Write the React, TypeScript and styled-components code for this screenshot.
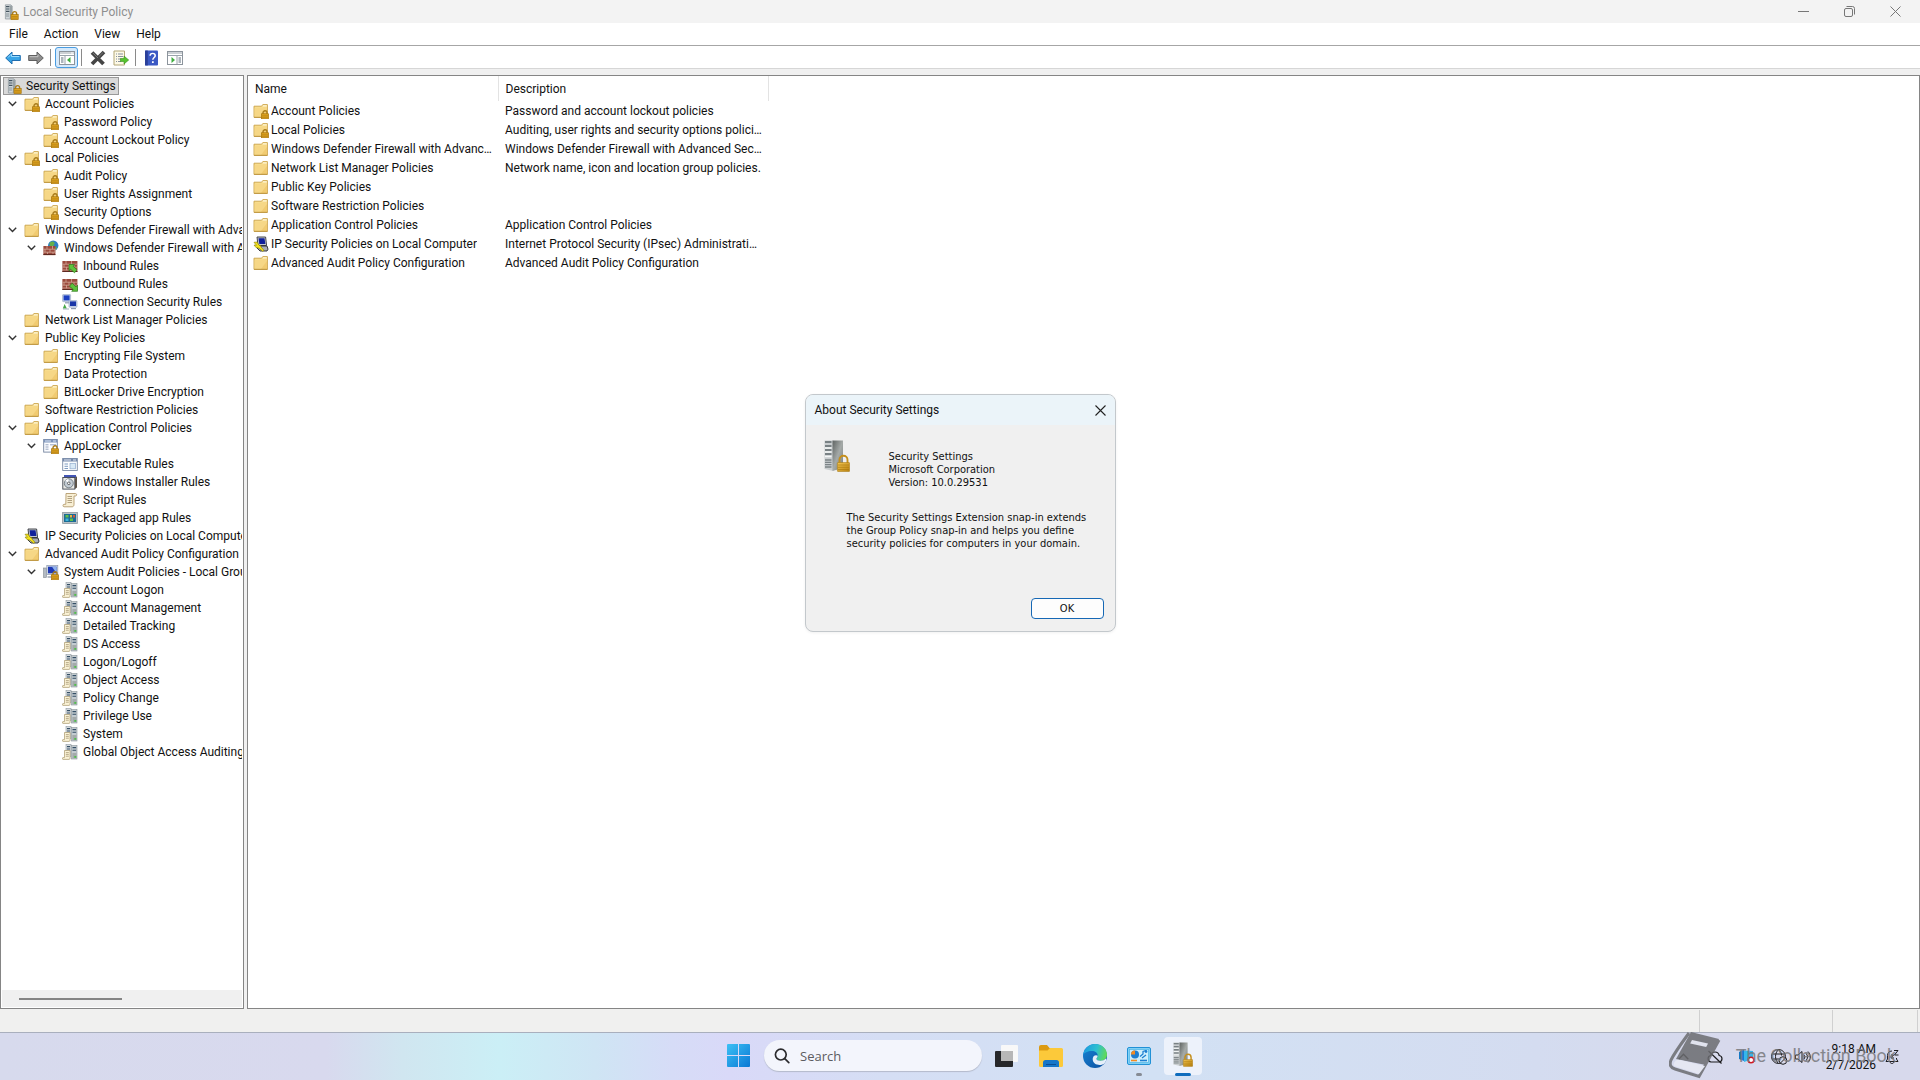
import React from "react";
import styled, { createGlobalStyle, css } from "styled-components";

const GlobalStyle = createGlobalStyle`
  *, *::before, *::after { box-sizing: border-box; }
  html, body, #root { height: 100%; }
  body { margin: 0; background: #f0f0f0; overflow: hidden; }
  button { font: inherit; color: inherit; background: none; border: 0; padding: 0; margin: 0; }
  ul { list-style: none; margin: 0; padding: 0; }
  svg { display: block; flex: none; }
`;

const uiFont = `Roboto, "Noto Sans", sans-serif`;

/* ---------- icons ---------- */

const Lock = ({ x = 8, y = 7 }: { x?: number; y?: number }) => (
  <g transform={`translate(${x} ${y})`}>
    <path d="M2 5V3a2 2 0 0 1 4 0v2" fill="none" stroke="#a87c1c" strokeWidth="1.4" />
    <rect x="0.4" y="4" width="7.2" height="5" fill="#dfa522" stroke="#a6740c" strokeWidth="0.7" />
    <path d="M1 6h6M1 7.5h6" stroke="#b27d10" strokeWidth="0.7" />
  </g>
);

const FolderShape = () => (
  <>
    <path d="M1 3.2h7.6l1.2-1.6h4.6v12.8H1z" fill="#f7dc8c" stroke="#c9a148" strokeWidth="0.9" />
    <path d="M1.6 5h7.8l1-1.4h3.6v10.2H1.6z" fill="#f6d786" />
    <path d="M8 13.9h6V6z" fill="#efc668" opacity="0.7" />
    <path d="M9.8 2.9h4" stroke="#fffbe5" strokeWidth="1.1" />
    <path d="M1.2 14.3h13.2" stroke="#b98f3a" strokeWidth="0.8" />
  </>
);

const TowerShape = () => (
  <>
    <path d="M2.4 0.8h5.2l1.6 1.2v13H2.4z" fill="#cfd6da" stroke="#8b9499" strokeWidth="0.7" />
    <path d="M6.8 1.2 9 2.2v12.4l-2.2.4z" fill="#98a1a4" />
    <path d="M3 2.6h3.4M3 5h3.4M3 7.4h3.4" stroke="#43535e" strokeWidth="1.1" />
    <path d="M3 10h3M3 12h3" stroke="#7a868c" strokeWidth="0.8" />
  </>
);

const BricksShape = ({ y = 3, w = 15, h = 11 }: { y?: number; w?: number; h?: number }) => (
  <g>
    <rect x="0.4" y={y} width={w} height={h} fill="#9b4a3d" />
    <path
      d={`M0.4 ${y + 3.2}h${w}M0.4 ${y + 6.2}h${w}M0.4 ${y + 9}h${w}M4 ${y}v3.2M9.5 ${y}v3.2M2 ${y + 3.2}v3M7 ${y + 3.2}v3M12 ${y + 3.2}v3M4.5 ${y + 6.2}v3M10 ${y + 6.2}v3`}
      stroke="#d9b3a4"
      strokeWidth="0.7"
      fill="none"
    />
    <path d={`M0.4 ${y + h - 0.5}h${w}`} stroke="#5d2a22" strokeWidth="1" />
  </g>
);

const icons: Record<string, React.ReactNode> = {
  folder: <FolderShape />,
  lockedFolder: (
    <>
      <FolderShape />
      <Lock x={8} y={6.8} />
    </>
  ),
  security: (
    <>
      <TowerShape />
      <Lock x={7.6} y={6.6} />
    </>
  ),
  firewall: (
    <>
      <circle cx="10.2" cy="5.6" r="5.2" fill="#2d7fc4" />
      <path d="M7 2.4c2-1.4 4-.8 4.6.6s-1.6 1.6-1 3 2.4 0 3 1.4-1.6 2.8-3 2.8-1-2.2-2.4-3S5.800 3.800 7 2.400z" fill="#63b04a" />
      <BricksShape y={6} w={12} h={9} />
    </>
  ),
  inbound: (
    <>
      <BricksShape />
      <path d="M7 6.500h5.500l-1.300 1.800 3.800 3.500-2.500 3-4-3.700L7 13z" fill="#5fc23c" stroke="#2d7a1b" strokeWidth="0.7" />
    </>
  ),
  outbound: (
    <>
      <BricksShape />
      <path d="M15.500 15.300H9.700l1.500-1.800-3.700-3.300 2.600-3 3.900 3.600 1.500-1.600z" fill="#5fc23c" stroke="#2d7a1b" strokeWidth="0.7" />
    </>
  ),
  connection: (
    <>
      <rect x="0.6" y="0.6" width="8" height="7" rx="0.5" fill="#c8d4ea" stroke="#8fa0c0" strokeWidth="0.6" />
      <rect x="1.6" y="1.4" width="6" height="5" fill="#1c3fc0" />
      <path d="M3 8.8h4" stroke="#8d9ab0" strokeWidth="1.2" />
      <rect x="7" y="6.6" width="8" height="6.6" rx="0.5" fill="#c8d4ea" stroke="#8fa0c0" strokeWidth="0.6" />
      <rect x="8" y="7.4" width="6" height="4.6" fill="#1a36a8" />
      <path d="M9 14.6h5" stroke="#8d9ab0" strokeWidth="1.2" />
      <path d="M0.8 14.5 2.6 10l2.2 4.5z" fill="#47a847" />
      <path d="M1 15h6" stroke="#9aa7ba" strokeWidth="0.9" />
    </>
  ),
  applocker: (
    <>
      <rect x="0.7" y="1.5" width="13.6" height="12.6" fill="#fbfcff" stroke="#74849f" strokeWidth="0.9" />
      <rect x="0.7" y="1.5" width="13.6" height="3" fill="#7d94ba" />
      <path d="M2 3h6M10 3h3" stroke="#e8effa" strokeWidth="0.9" />
      <path d="M2.5 6.8h3M2.5 9h3M2.5 11.2h3M7 6.8h6" stroke="#8b9bb5" strokeWidth="0.9" />
      <Lock x={8} y={6.8} />
    </>
  ),
  executable: (
    <>
      <rect x="0.7" y="2.5" width="14.6" height="12" fill="#fdfeff" stroke="#7c8ca6" strokeWidth="0.9" />
      <rect x="0.7" y="2.5" width="14.6" height="3" fill="#7488aa" />
      <path d="M2 4h7M11 4h3" stroke="#eef3fb" strokeWidth="0.9" />
      <path d="M2.5 8h3.5M2.5 10.3h3.5M2.5 12.5h3.5" stroke="#7f9bc0" strokeWidth="1" />
      <rect x="8" y="7.3" width="5.6" height="5.5" fill="#d8e9f6" stroke="#8fa9cc" strokeWidth="0.7" />
    </>
  ),
  installer: (
    <>
      <path d="M2 1h12v3H2z" fill="#4355b4" />
      <rect x="0.8" y="3.5" width="12" height="11.6" fill="#e9e9e5" stroke="#3f4650" strokeWidth="0.9" />
      <path d="M13 4.5 15 2v11.5L13 15z" fill="#5c5348" />
      <circle cx="6.8" cy="9.3" r="4.5" fill="#c3ccd4" stroke="#555e66" strokeWidth="0.7" />
      <path d="M6.8 9.3 3.4 6.6a4.5 4.5 0 0 1 3-1.7z" fill="#fff" />
      <circle cx="6.8" cy="9.3" r="1.3" fill="#fff" stroke="#333" strokeWidth="0.7" />
    </>
  ),
  script: (
    <>
      <path d="M4 1.5h9.5c1.5 0 1.5 2.5 0 2.5H12v8.500c0 1.500-.8 2.300-2 2.300H2c-1.300 0-1.300-2.500 0-2.500h1.800z" fill="#f8efd4" stroke="#b49b6e" strokeWidth="0.9" />
      <path d="M5.5 4.5H10M5.5 6.5H10M5.5 8.5H10M5.5 10.5H10" stroke="#a08d6b" strokeWidth="0.8" />
    </>
  ),
  packaged: (
    <>
      <rect x="0.6" y="2.5" width="14.8" height="11" fill="#b8c1c7" stroke="#8d989f" strokeWidth="0.8" />
      <rect x="2" y="4" width="12" height="8" fill="#1b6d94" />
      <path d="M3.5 5h3v2.5h-3zM8 8.5h3V11H8z" fill="#5fc04a" />
      <path d="M3.5 8.5h3V11h-3z" fill="#3fb4dc" />
      <path d="M8 5h2v2.5H8z" fill="#e8b53a" />
      <path d="M11 5h2v2.5h-2z" fill="#d0563e" />
    </>
  ),
  ipsec: (
    <>
      <path d="M4 1h8.600l1 8.500H5z" fill="#c4c8d0" stroke="#33363c" strokeWidth="0.9" />
      <path d="M5.500 2.300h6l.9 5.700H6.300z" fill="#10209c" />
      <path d="M5 10h9l1 3.200-1 1.800H7L4 12z" fill="#a9adb5" stroke="#26282c" strokeWidth="0.9" />
      <path d="M1 6.300 4 6l2 3.200 1.500.3.500 1.500 3 3.300-1.300 1L6 12.200l-3-.700-2-2.500 2.500.3z" fill="#f4e41c" stroke="#8a7d00" strokeWidth="0.6" />
    </>
  ),
  systemAudit: (
    <>
      <rect x="0.6" y="4" width="2.8" height="9.5" fill="#b3bac2" stroke="#7e868e" strokeWidth="0.6" />
      <rect x="3.8" y="1.5" width="11" height="9" fill="#d3dbe8" stroke="#8c98ab" strokeWidth="0.7" />
      <rect x="5" y="2.7" width="8.6" height="6.6" fill="#1d38b4" />
      <path d="M9 2.7h4.600v6.600z" fill="#8fb1ec" />
      <path d="M4.500 13h5" stroke="#98a1ad" strokeWidth="1.4" />
      <Lock x={8} y={6.8} />
    </>
  ),
  audit: (
    <>
      <rect x="4" y="0.6" width="5" height="12" fill="#d5dade" stroke="#8f999f" strokeWidth="0.6" />
      <rect x="9.6" y="1.5" width="5.4" height="13.5" fill="#c3cbd0" stroke="#8a949a" strokeWidth="0.6" />
      <path d="M5 2.6h3M5 5h3M10.500 3.600h3.600M10.500 6.200h3.600" stroke="#344f66" strokeWidth="1.1" />
      <rect x="10.4" y="9" width="4" height="5.3" fill="#a3aaaa" />
      <rect x="12.3" y="12" width="2" height="1.8" fill="#4fc04a" />
      <path d="M2.500 6.500h5.600v7.700c0 .7-.5 1.200-1 1.200H.9c-.7 0-.7-1.800 0-1.800h1.600z" fill="#fbf3d6" stroke="#a8976b" strokeWidth="0.7" />
      <path d="M3.800 8.600h3M3.800 10.400h3M3.800 12.200h3" stroke="#9c8d68" strokeWidth="0.7" />
    </>
  ),
};

const Icon = ({ name }: { name: string }) => (
  <svg width="16" height="16" viewBox="0 0 16 16" aria-hidden="true">
    {icons[name]}
  </svg>
);

const ServerLock = ({ width, height }: { width: number; height: number }) => (
  <svg width={width} height={height} viewBox="0 0 26 32" aria-hidden="true">
    <defs>
      <linearGradient id="side" x1="0" y1="0" x2="1" y2="1">
        <stop offset="0" stopColor="#5f6463" />
        <stop offset="0.5" stopColor="#a5aaa8" />
        <stop offset="1" stopColor="#7a7f7d" />
      </linearGradient>
      <linearGradient id="gold" x1="0" y1="0" x2="1" y2="1">
        <stop offset="0" stopColor="#f3c653" />
        <stop offset="1" stopColor="#b8810f" />
      </linearGradient>
    </defs>
    <path d="M0.500 0.500h9v30.500l-9-2z" fill="#c9cdcf" />
    <path d="M8.500 0.500H19V28l-10.500 3z" fill="url(#side)" />
    <path d="M1 2h6.500M1 6h6.500M1 10h6.500M1 14h6.500" stroke="#5f686c" strokeWidth="1.4" />
    <path d="M1 8h6.500M1 12h6.500M1 16.500h6.500" stroke="#f4f6f6" strokeWidth="1.3" />
    <path d="M1 20h6.500M1 22.300h6.500M1 24.600h6.500M1 27h6.500" stroke="#7c8487" strokeWidth="1.3" />
    <path d="M15.500 23v-3.200a4 4 0 0 1 8 0V23" fill="none" stroke="#c58f1c" strokeWidth="1.9" />
    <rect x="13.4" y="22.5" width="12.2" height="9" rx="0.6" fill="url(#gold)" stroke="#a57408" strokeWidth="0.5" />
    <path d="M14 25h11M14 27.300h11M14 29.500h11" stroke="#a8770b" strokeWidth="0.6" />
  </svg>
);

/* ---------- window chrome ---------- */

const Desktop = styled.div`
  display: flex;
  flex-direction: column;
  height: 100vh;
  color: #111;
  font: 12px/16px ${uiFont};
  cursor: default;
`;

const Window = styled.main`
  position: relative;
  display: flex;
  flex: 1;
  flex-direction: column;
  min-height: 0;
`;

const TitleBar = styled.header`
  display: flex;
  align-items: center;
  height: 23px;
  padding: 0 2px 0 3px;
  background: #f3f3f3;
`;

const WindowTitle = styled.h1`
  flex: 1;
  margin: 0 0 0 4px;
  font: inherit;
  color: #8f8f8f;
`;

const CaptionButton = styled.button`
  display: grid;
  place-items: center;
  width: 46px;
  height: 21px;
`;

const MenuBar = styled.nav`
  display: flex;
  align-items: center;
  gap: 16px;
  height: 23px;
  padding-left: 9px;
  background: #fff;
  border-bottom: 1px solid #a6a6a6;
`;

const ToolBar = styled.div`
  display: flex;
  align-items: center;
  height: 23px;
  padding: 1px 0 0 1px;
  background: #fff;
  border-bottom: 1px solid #d6d6d6;
`;

const ToolButton = styled.button<{ $active?: boolean }>`
  display: grid;
  place-items: center;
  width: 23px;
  height: 21px;
  border: 1px solid transparent;
  border-radius: 3px;
  ${(p) =>
    p.$active &&
    css`
      background: #d5e9fb;
      border-color: #4a9ce0;
    `}
`;

const ToolDivider = styled.span`
  width: 1px;
  height: 17px;
  margin: 0 4px 0 3px;
  background: #8a8a8a;
`;

const Panes = styled.div`
  display: grid;
  grid-template-columns: 244px 1fr;
  gap: 3px;
  flex: 1;
  min-height: 0;
  padding-top: 6px;
`;

const Pane = styled.section`
  display: flex;
  flex-direction: column;
  min-width: 0;
  background: #fff;
  border: 1px solid #858585;
`;

/* ---------- tree ---------- */

const Tree = styled.ul`
  flex: 1;
  min-height: 0;
  margin-right: 1px;
  padding: 1px 0 0 2px;
  overflow: hidden;
`;

const TreeRow = styled.li<{ $depth: number }>`
  display: flex;
  align-items: center;
  height: 18px;
  padding-left: ${(p) => p.$depth * 19 - 18}px;
  white-space: nowrap;
`;

const RootRow = styled.li`
  display: flex;
  height: 18px;
`;

const RootLabel = styled.span`
  display: flex;
  align-items: center;
  gap: 4px;
  height: 18px;
  padding: 0 2px;
  background: #d9d9d9;
  border: 1px solid #999;
`;

const Expander = styled.button`
  display: grid;
  flex: none;
  place-items: center;
  width: 16px;
  height: 16px;
  margin-right: 4px;
`;

const ExpanderSpace = styled.span`
  flex: none;
  width: 20px;
`;

const TreeLabel = styled.span`
  margin-left: 5px;
`;

const HScroll = styled.div`
  height: 17px;
  margin: 0 1px 1px;
  padding: 8px 17px 0;
  background: #f0f0f0;
`;

const HThumb = styled.div`
  width: 50%;
  height: 2px;
  background: #858585;
`;

type Node = [depth: number, icon: string, label: string, open?: boolean];

const nodes: Node[] = [
  [1, "lockedFolder", "Account Policies", true],
  [2, "lockedFolder", "Password Policy"],
  [2, "lockedFolder", "Account Lockout Policy"],
  [1, "lockedFolder", "Local Policies", true],
  [2, "lockedFolder", "Audit Policy"],
  [2, "lockedFolder", "User Rights Assignment"],
  [2, "lockedFolder", "Security Options"],
  [1, "folder", "Windows Defender Firewall with Advanced Security", true],
  [2, "firewall", "Windows Defender Firewall with Advanced Security", true],
  [3, "inbound", "Inbound Rules"],
  [3, "outbound", "Outbound Rules"],
  [3, "connection", "Connection Security Rules"],
  [1, "folder", "Network List Manager Policies"],
  [1, "folder", "Public Key Policies", true],
  [2, "folder", "Encrypting File System"],
  [2, "folder", "Data Protection"],
  [2, "folder", "BitLocker Drive Encryption"],
  [1, "folder", "Software Restriction Policies"],
  [1, "folder", "Application Control Policies", true],
  [2, "applocker", "AppLocker", true],
  [3, "executable", "Executable Rules"],
  [3, "installer", "Windows Installer Rules"],
  [3, "script", "Script Rules"],
  [3, "packaged", "Packaged app Rules"],
  [1, "ipsec", "IP Security Policies on Local Computer"],
  [1, "folder", "Advanced Audit Policy Configuration", true],
  [2, "systemAudit", "System Audit Policies - Local Group Policy Object", true],
  [3, "audit", "Account Logon"],
  [3, "audit", "Account Management"],
  [3, "audit", "Detailed Tracking"],
  [3, "audit", "DS Access"],
  [3, "audit", "Logon/Logoff"],
  [3, "audit", "Object Access"],
  [3, "audit", "Policy Change"],
  [3, "audit", "Privilege Use"],
  [3, "audit", "System"],
  [3, "audit", "Global Object Access Auditing"],
];

/* ---------- list ---------- */

const ListTable = styled.table`
  width: 520px;
  table-layout: fixed;
  border-collapse: collapse;
`;

const HeadCell = styled.th<{ $width: number }>`
  width: ${(p) => p.$width}px;
  height: 25px;
  padding: 0 6px 0 7px;
  border-right: 1px solid #e3e3e3;
  font-weight: 400;
  text-align: left;
`;

const Cell = styled.td`
  height: 19px;
  padding: 0 6px 0 7px;
  overflow: hidden;
  text-overflow: ellipsis;
  white-space: nowrap;
`;

const NameCell = styled.div`
  display: flex;
  align-items: center;
  gap: 2px;
  margin-left: -2px;
`;

const Ellipsis = styled.span`
  overflow: hidden;
  text-overflow: ellipsis;
`;

const rows: [string, string, string][] = [
  ["lockedFolder", "Account Policies", "Password and account lockout policies"],
  ["lockedFolder", "Local Policies", "Auditing, user rights and security options policies"],
  ["folder", "Windows Defender Firewall with Advanced Security", "Windows Defender Firewall with Advanced Security"],
  ["folder", "Network List Manager Policies", "Network name, icon and location group policies."],
  ["folder", "Public Key Policies", ""],
  ["folder", "Software Restriction Policies", ""],
  ["folder", "Application Control Policies", "Application Control Policies"],
  ["ipsec", "IP Security Policies on Local Computer", "Internet Protocol Security (IPsec) Administration."],
  ["folder", "Advanced Audit Policy Configuration", "Advanced Audit Policy Configuration"],
];

/* ---------- status bar ---------- */

const StatusBar = styled.footer`
  display: flex;
  justify-content: flex-end;
  height: 23px;
  padding: 1px 2px 0 0;
  background: #f0f0ef;
`;

const StatusCell = styled.span<{ $width: number }>`
  width: ${(p) => p.$width}px;
  border-left: 1px solid #d0d0d0;
  &:last-child {
    border-right: 1px solid #d0d0d0;
  }
`;

/* ---------- dialog ---------- */

const DialogLayer = styled.div`
  position: absolute;
  inset: 0;
  display: grid;
  place-items: center;
  padding-bottom: 6px;
`;

const Dialog = styled.div`
  width: 311px;
  background: #f0f0f0;
  border: 1px solid #c3c8cc;
  border-radius: 8px;
  overflow: hidden;
  box-shadow: 0 1px 3px rgba(0, 0, 0, 0.06);
`;

const DialogTitle = styled.div`
  display: flex;
  align-items: center;
  justify-content: space-between;
  height: 30px;
  padding: 0 9px;
  background: #ebf4f9;
`;

const DialogHeading = styled.h2`
  margin: 0;
  font: inherit;
`;

const DialogBody = styled.div`
  display: flex;
  flex-direction: column;
  padding: 15px 11px 12px 18px;
  font: 11px/13px "DejaVu Sans Condensed", "Noto Sans", sans-serif;
`;

const Product = styled.div`
  display: flex;
  gap: 39px;
`;

const ProductText = styled.p`
  margin: 10px 0 0;
`;

const Blurb = styled.p`
  margin: 22px 0 48px 23px;
  white-space: nowrap;
`;

const OkButton = styled.button`
  align-self: flex-end;
  width: 73px;
  height: 21px;
  background: #fdfdfd;
  border: 1px solid #1668b5;
  border-radius: 4px;
`;

/* ---------- taskbar ---------- */

const Taskbar = styled.div`
  position: relative;
  display: grid;
  grid-template-columns: 1fr auto 1fr;
  align-items: center;
  height: 48px;
  border-top: 1px solid #a9afbd;
  background: linear-gradient(
    90deg,
    #d7daed 0%,
    #d8d9ee 17%,
    #d0e6f0 21%,
    #cbeff6 26%,
    #cfe5f4 31%,
    #d6dcf7 35%,
    #d9d9f8 38%,
    #d5def4 46%,
    #d2e1f4 60%,
    #d4dcf0 80%,
    #d7d9ec 90%,
    #d7d9ec 100%
  );
`;

const TaskGroup = styled.div`
  display: flex;
  grid-column: 2;
  align-items: center;
  padding: 0 0 2px 1px;
`;

const TaskButton = styled.button`
  position: relative;
  display: grid;
  place-items: center;
  width: 44px;
  height: 44px;
`;

const ActiveTile = styled.span`
  display: grid;
  place-items: center;
  width: 38px;
  height: 38px;
  padding-bottom: 2px;
  border-radius: 4px;
  background: #edf2fb;
`;

const Indicator = styled.span<{ $active?: boolean }>`
  position: absolute;
  bottom: 2px;
  left: 50%;
  width: ${(p) => (p.$active ? 16 : 6)}px;
  height: 3px;
  transform: translateX(-50%);
  border-radius: 2px;
  background: ${(p) => (p.$active ? "#0f6cbd" : "#868b94")};
`;

const SearchBox = styled.label`
  display: flex;
  align-items: center;
  gap: 10px;
  width: 218px;
  height: 31px;
  margin: 0 3px 0 4px;
  padding: 0 10px;
  border-radius: 16px;
  background: #f3f5fc;
  box-shadow: 0 1px 1px #b4bacb;
`;

const SearchInput = styled.input`
  flex: 1;
  min-width: 0;
  padding: 0;
  border: 0;
  outline: 0;
  background: none;
  font: 13px/20px "Open Sans", "Noto Sans", sans-serif;
  &::placeholder {
    color: #5c5c60;
    opacity: 1;
  }
`;

const Tray = styled.div`
  display: flex;
  grid-column: 3;
  align-items: center;
  justify-content: flex-end;
  padding-right: 20px;
`;

const TrayButton = styled.button<{ $gap: number }>`
  display: grid;
  place-items: center;
  width: 16px;
  height: 20px;
  margin-right: ${(p) => p.$gap}px;
`;

const Clock = styled.time`
  width: 56px;
  margin-right: 8px;
  text-align: right;
`;

const Watermark = styled.div`
  position: absolute;
  right: 24px;
  bottom: 0;
  display: flex;
  align-items: center;
  gap: 15px;
  height: 48px;
  color: #77787c;
  font: 18px/20px ${uiFont};
  opacity: 0.85;
  pointer-events: none;
`;

export default function App() {
  return (
    <Desktop>
      <GlobalStyle />
      <Window>
        <TitleBar>
          <Icon name="security" />
          <WindowTitle>Local Security Policy</WindowTitle>
          <CaptionButton aria-label="Minimize">
            <svg width="11" height="11" viewBox="0 0 11 11"><path d="M0 5.500h11" stroke="#777" /></svg>
          </CaptionButton>
          <CaptionButton aria-label="Restore">
            <svg width="11" height="11" viewBox="0 0 11 11" fill="none" stroke="#777">
              <rect x="0.5" y="2.5" width="8" height="8" rx="1.5" />
              <path d="M2.500 .5h6a2 2 0 0 1 2 2v6" />
            </svg>
          </CaptionButton>
          <CaptionButton aria-label="Close">
            <svg width="11" height="11" viewBox="0 0 11 11"><path d="M.5.5l10 10M10.500.5l-10 10" stroke="#777" /></svg>
          </CaptionButton>
        </TitleBar>

        <MenuBar>
          <button>File</button>
          <button>Action</button>
          <button>View</button>
          <button>Help</button>
        </MenuBar>

        <ToolBar>
          <ToolButton aria-label="Back">
            <svg width="16" height="14" viewBox="0 0 16 14">
              <path d="M.7 7 7 1v3.500h8.300v5H7V13z" fill="#38a4e6" stroke="#1f6daf" />
              <path d="M3 6.500 6.500 3v2.500h7.800" fill="none" stroke="#9adcff" />
            </svg>
          </ToolButton>
          <ToolButton aria-label="Forward">
            <svg width="16" height="14" viewBox="0 0 16 14">
              <path d="M15.300 7 9 1v3.500H.7v5H9V13z" fill="#8d8d8d" stroke="#5f5f5f" />
              <path d="M1.700 5.700H10V3.500" fill="none" stroke="#c4c4c4" />
            </svg>
          </ToolButton>
          <ToolDivider />
          <ToolButton $active aria-label="Show or hide console tree">
            <svg width="16" height="14" viewBox="0 0 16 14">
              <rect x="0.5" y="0.5" width="15" height="13" fill="#fff" stroke="#8c949c" />
              <path d="M1 2h14M1 4.500h14" stroke="#9aa3ab" />
              <path d="M12 2h2.500" stroke="#fff" />
              <path d="M2 7h2.500M2 9h2.500M2 11h2.500" stroke="#5d6c7a" />
              <path d="M6 5v8" stroke="#9aa3ab" />
              <path d="M11.500 6v6L8 9z" fill="#3fae3f" />
            </svg>
          </ToolButton>
          <ToolDivider />
          <ToolButton aria-label="Delete">
            <svg width="16" height="16" viewBox="0 0 16 16">
              <path d="M2 2.500 13.500 14M14 2 2 14" stroke="#454545" strokeWidth="3.800" />
              <path d="M2.500 2.600 8 8M13 2.600 9 6.500" stroke="#7a7a7a" />
            </svg>
          </ToolButton>
          <ToolButton aria-label="Export List">
            <svg width="16" height="16" viewBox="0 0 16 16">
              <path d="M1 1h10.500v14H1z" fill="#fdf9e6" stroke="#b2a677" />
              <path d="M3 4h1M5 4h5M3 6.500h1M5 6.500h5M3 9h1M5 9h3M3 11.500h1M5 11.500h3" stroke="#8791a0" />
              <path d="M7.500 8.500H11V6l4.700 4-4.700 4v-2.500H7.500z" fill="#56c32f" stroke="#3a8f1c" strokeWidth="0.6" />
            </svg>
          </ToolButton>
          <ToolDivider />
          <ToolButton aria-label="Help">
            <svg width="13" height="16" viewBox="0 0 14 16">
              <rect width="14" height="16" rx="1" fill="#3b59c4" />
              <rect width="3" height="16" fill="#2a3f99" />
              <path d="M5.500 5.500c0-3.300 5.500-3.300 5.500 0 0 2-2.600 2-2.600 4.500" fill="none" stroke="#fff" strokeWidth="1.6" />
              <rect x="7.5" y="11.5" width="1.9" height="1.9" fill="#fff" />
            </svg>
          </ToolButton>
          <ToolButton aria-label="Show or hide action pane">
            <svg width="16" height="14" viewBox="0 0 16 14">
              <rect x="0.5" y="0.5" width="15" height="13" fill="#fff" stroke="#8c949c" />
              <path d="M1 2h14M1 4.500h14" stroke="#9aa3ab" />
              <path d="M11.500 7H14M11.500 9H14M11.500 11H14" stroke="#5d6c7a" />
              <path d="M10 5v8" stroke="#9aa3ab" />
              <path d="M4.500 6v6L8 9z" fill="#3fae3f" />
            </svg>
          </ToolButton>
        </ToolBar>

        <Panes>
          <Pane aria-label="Console tree">
            <Tree>
              <RootRow>
                <RootLabel>
                  <Icon name="security" />
                  <span>Security Settings</span>
                </RootLabel>
              </RootRow>
              {nodes.map(([depth, icon, label, open], i) => (
                <TreeRow key={i} $depth={depth}>
                  {open ? (
                    <Expander aria-label={`Collapse ${label}`}>
                      <svg width="9" height="6" viewBox="0 0 9 6">
                        <path d="M.8.8 4.500 4.500 8.200.8" fill="none" stroke="#333" strokeWidth="1.4" />
                      </svg>
                    </Expander>
                  ) : (
                    <ExpanderSpace />
                  )}
                  <Icon name={icon} />
                  <TreeLabel>{label}</TreeLabel>
                </TreeRow>
              ))}
            </Tree>
            <HScroll>
              <HThumb />
            </HScroll>
          </Pane>

          <Pane aria-label="Policies">
            <ListTable>
              <thead>
                <tr>
                  <HeadCell $width={250}>Name</HeadCell>
                  <HeadCell $width={270}>Description</HeadCell>
                </tr>
              </thead>
              <tbody>
                {rows.map(([icon, name, description]) => (
                  <tr key={name}>
                    <Cell>
                      <NameCell>
                        <Icon name={icon} />
                        <Ellipsis>{name}</Ellipsis>
                      </NameCell>
                    </Cell>
                    <Cell>{description}</Cell>
                  </tr>
                ))}
              </tbody>
            </ListTable>
          </Pane>
        </Panes>

        <StatusBar>
          <StatusCell $width={133} />
          <StatusCell $width={86} />
        </StatusBar>

        <DialogLayer>
          <Dialog role="dialog" aria-labelledby="about-title">
            <DialogTitle>
              <DialogHeading id="about-title">About Security Settings</DialogHeading>
              <button aria-label="Close dialog">
                <svg width="11" height="11" viewBox="0 0 11 11"><path d="M.5.5l10 10M10.500.5l-10 10" stroke="#222" strokeWidth="1.1" /></svg>
              </button>
            </DialogTitle>
            <DialogBody>
              <Product>
                <ServerLock width={26} height={32} />
                <ProductText>
                  Security Settings
                  <br />
                  Microsoft Corporation
                  <br />
                  Version: 10.0.29531
                </ProductText>
              </Product>
              <Blurb>
                The Security Settings Extension snap-in extends
                <br />
                the Group Policy snap-in and helps you define
                <br />
                security policies for computers in your domain.
              </Blurb>
              <OkButton>OK</OkButton>
            </DialogBody>
          </Dialog>
        </DialogLayer>
      </Window>

      <Taskbar>
        <TaskGroup>
          <TaskButton aria-label="Start">
            <svg width="23" height="23" viewBox="0 0 23 23">
              <defs>
                <linearGradient id="win" x1="0" y1="0" x2="1" y2="1">
                  <stop offset="0" stopColor="#3cc0f5" />
                  <stop offset="1" stopColor="#0a78d4" />
                </linearGradient>
              </defs>
              <path d="M1 0h10v11H0V1a1 1 0 0 1 1-1zM12 0h10a1 1 0 0 1 1 1v10H12zM0 12h11v11H1a1 1 0 0 1-1-1zM12 12h11v10a1 1 0 0 1-1 1H12z" fill="url(#win)" />
            </svg>
          </TaskButton>
          <SearchBox>
            <svg width="16" height="16" viewBox="0 0 16 16" fill="none" stroke="#2b2b2e" strokeWidth="1.7" strokeLinecap="round">
              <circle cx="6.8" cy="6.6" r="5.4" />
              <path d="m10.800 10.600 4 4" />
            </svg>
            <SearchInput type="text" placeholder="Search" aria-label="Search" />
          </SearchBox>
          <TaskButton aria-label="Task view">
            <svg width="24" height="24" viewBox="0 0 24 24">
              <rect x="6" y="1" width="17" height="17" rx="1" fill="#f8f8f8" />
              <rect x="0" y="7" width="18" height="16" rx="1" fill="#26272a" />
              <path d="M6 7h12v10H6z" fill="#b7b7b7" />
            </svg>
          </TaskButton>
          <TaskButton aria-label="File Explorer">
            <svg width="24" height="22" viewBox="0 0 24 22">
              <path d="M0 2a2 2 0 0 1 2-2h6l2.500 3H22v6H0z" fill="#dc9a12" />
              <path d="M0 5.500h8.500L11 3h11.500A1.500 1.500 0 0 1 24 4.500v16a1.500 1.500 0 0 1-1.500 1.500h-21A1.500 1.500 0 0 1 0 20.500z" fill="#fcc93a" />
              <path d="M4 22v-4.500A2.500 2.500 0 0 1 6.500 15h11a2.500 2.500 0 0 1 2.500 2.500V22z" fill="#1676c8" />
              <path d="M7 19.500h10" stroke="#0b4f95" />
            </svg>
          </TaskButton>
          <TaskButton aria-label="Microsoft Edge">
            <svg width="24" height="24" viewBox="0 0 24 24">
              <defs>
                <linearGradient id="edgeTop" x1="0" y1="0.3" x2="1" y2="0.5">
                  <stop offset="0" stopColor="#1c9ae0" />
                  <stop offset="0.55" stopColor="#2fc0d0" />
                  <stop offset="1" stopColor="#62da55" />
                </linearGradient>
                <linearGradient id="edgeLow" x1="0" y1="0" x2="1" y2="1">
                  <stop offset="0" stopColor="#1784d4" />
                  <stop offset="1" stopColor="#0c4fa0" />
                </linearGradient>
              </defs>
              <circle cx="12" cy="12" r="12" fill="url(#edgeLow)" />
              <path d="M.2 10.500C1.200 4.400 6 0 12 0c7 0 12 5 12 10.500 0 4-3 6.300-6.300 6.300-3 0-4.300-1-4.300-2 0-.8 1.300-1.400 1.300-3.300C14.700 9 12.200 7 8.800 7 4.500 7 1.300 9 .2 10.500z" fill="url(#edgeTop)" />
              <path d="M13.400 14.800c0 1 1.300 2 4.300 2 2 0 3.800-.7 5-2.200l.7 1.400c-.5 1.400-1.300 2.600-2.300 3.700-2.500 1.600-6.600 1.800-9.300-.2-2.300-1.700-2.800-5-1.200-7.200 1-1.300 3-1.500 4.100-.6 0 1.500-1.300 2.300-1.300 3.100z" fill="#e5effa" />
            </svg>
          </TaskButton>
          <TaskButton aria-label="Control Panel">
            <svg width="24" height="18" viewBox="0 0 24 18">
              <rect x="0.5" y="0.5" width="23" height="17" rx="1.5" fill="#7fd0f5" stroke="#2191d6" />
              <rect x="2.5" y="2.5" width="19" height="13" fill="#cdeefc" stroke="#4db4e6" strokeWidth="0.7" />
              <circle cx="8" cy="7.5" r="4" fill="#1c7ed0" />
              <path d="M8 7.500V3.500a4 4 0 0 0-4 4z" fill="#f18a22" />
              <path d="M13 9.500 16 7V4.500l3-1M15 11l4-3" fill="none" stroke="#1c7ed0" strokeWidth="1.2" />
              <circle cx="19" cy="4.5" r="1.4" fill="#1c7ed0" />
              <path d="M4 13.500h6" stroke="#f18a22" strokeWidth="1.6" />
              <path d="M13 13.500h7" stroke="#1c7ed0" strokeWidth="1.6" />
            </svg>
            <Indicator />
          </TaskButton>
          <TaskButton aria-label="Local Security Policy">
            <ActiveTile>
              <ServerLock width={20} height={25} />
            </ActiveTile>
            <Indicator $active />
          </TaskButton>
        </TaskGroup>

        <Tray>
          <TrayButton $gap={16} aria-label="Show hidden icons">
            <svg width="11" height="7" viewBox="0 0 11 7"><path d="M.7 6.200 5.500 1.200l4.800 5" fill="none" stroke="#222" strokeWidth="1.3" /></svg>
          </TrayButton>
          <TrayButton $gap={16} aria-label="OneDrive">
            <svg width="16" height="14" viewBox="0 0 16 14" fill="none" stroke="#1d1d1f" strokeWidth="1.2">
              <path d="M4 12a3.300 3.300 0 0 1-.3-6.500C4.400 3 6 2 8 2s3.700 1.300 4.200 3.500A3.300 3.300 0 0 1 12.300 12z" />
              <path d="m1.500 1 13 12.500" />
            </svg>
          </TrayButton>
          <TrayButton $gap={16} aria-label="Windows Security">
            <svg width="16" height="15" viewBox="0 0 16 15">
              <path d="M0 3 5 .5V12l-5-2z" fill="#1579cf" />
              <path d="M5 1.500 14 2v8l-9 3z" fill="#35b5ec" />
              <circle cx="12" cy="11" r="2.8" fill="#fff" stroke="#cf1a22" strokeWidth="1.5" />
            </svg>
          </TrayButton>
          <TrayButton $gap={8} aria-label="Network">
            <svg width="17" height="16" viewBox="0 0 17 16" fill="none" stroke="#1d1d1f">
              <circle cx="7.5" cy="7.5" r="7" />
              <path d="M1 5h13M1 10h7M7.500.5c-4 4-4 10 0 14M7.500.5c2 2 3 4 3 6" />
              <circle cx="12" cy="11.5" r="3.8" fill="#d7d9ec" />
              <path d="m9.500 14 5-5" />
            </svg>
          </TrayButton>
          <TrayButton $gap={9} aria-label="Volume">
            <svg width="16" height="14" viewBox="0 0 16 14" fill="none" stroke="#1d1d1f">
              <path d="M.5 5h2.500l4-3.500v11L3 9H.5z" />
              <path d="M9 5c1 1.200 1 2.800 0 4M11 3.300c2 2.200 2 5.200 0 7.400M13 1.500c3 3.200 3 7.800 0 11" />
            </svg>
          </TrayButton>
          <Clock>
            9:18 AM
            <br />
            2/7/2026
          </Clock>
          <TrayButton $gap={0} aria-label="Notifications">
            <svg width="16" height="16" viewBox="0 0 16 16" fill="none" stroke="#1d1d1f">
              <path d="M8 2C5 2 3.500 4 3.500 6.500V10L2 12.500h12L12.500 10V9M6 13c.5 2 3.500 2 4 0" />
              <path d="M10 1.500h4L10.500 6h4M7 6h2.500L7 9h3" />
            </svg>
          </TrayButton>
        </Tray>

        <Watermark>
          <svg width="52" height="48" viewBox="0 0 52 48">
            <path d="M22 0 50 7 37 33 7 27z" fill="#6b6c70" />
            <path d="m23 8 16 3.500-1.800 3.500-16-3.500z" fill="#e3e5ef" />
            <path d="M20 1C12 12 6 20 2 28c-2 5 0 8 4 9l24 7.500L50 8" fill="none" stroke="#6b6c70" strokeWidth="3" />
            <path d="M5 31c1-3 4-4 6-3l25 6-6 8-22-7c-2-.5-4-1.500-3-4z" fill="#e8eaf3" />
          </svg>
          <span>The Collection Book</span>
        </Watermark>
      </Taskbar>
    </Desktop>
  );
}
